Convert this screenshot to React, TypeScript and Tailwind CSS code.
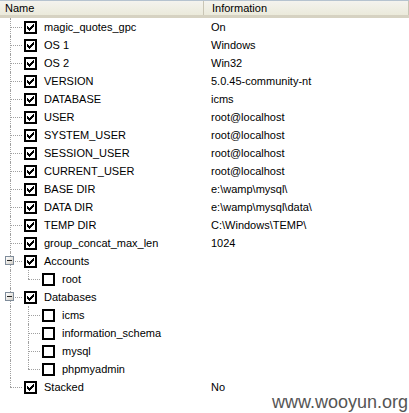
import React from "react";

type Row = { name: string; info?: string; level: 0 | 1; checked: boolean; expand?: boolean; childLine?: "mid" | "last" | "none"; last?: boolean };

const rows: Row[] = [
  { name: "magic_quotes_gpc", info: "On", level: 0, checked: true },
  { name: "OS 1", info: "Windows", level: 0, checked: true },
  { name: "OS 2", info: "Win32", level: 0, checked: true },
  { name: "VERSION", info: "5.0.45-community-nt", level: 0, checked: true },
  { name: "DATABASE", info: "icms", level: 0, checked: true },
  { name: "USER", info: "root@localhost", level: 0, checked: true },
  { name: "SYSTEM_USER", info: "root@localhost", level: 0, checked: true },
  { name: "SESSION_USER", info: "root@localhost", level: 0, checked: true },
  { name: "CURRENT_USER", info: "root@localhost", level: 0, checked: true },
  { name: "BASE DIR", info: "e:\\wamp\\mysql\\", level: 0, checked: true },
  { name: "DATA DIR", info: "e:\\wamp\\mysql\\data\\", level: 0, checked: true },
  { name: "TEMP DIR", info: "C:\\Windows\\TEMP\\", level: 0, checked: true },
  { name: "group_concat_max_len", info: "1024", level: 0, checked: true },
  { name: "Accounts", level: 0, checked: true, expand: true },
  { name: "root", level: 1, checked: false, childLine: "last" },
  { name: "Databases", level: 0, checked: true, expand: true },
  { name: "icms", level: 1, checked: false, childLine: "mid" },
  { name: "information_schema", level: 1, checked: false, childLine: "mid" },
  { name: "mysql", level: 1, checked: false, childLine: "mid" },
  { name: "phpmyadmin", level: 1, checked: false, childLine: "last" },
  { name: "Stacked", info: "No", level: 0, checked: true, last: true },
];

function Check({ checked }: { checked: boolean }) {
  return (
    <div className="w-[13px] h-[13px] border-2 border-black bg-white flex items-center justify-center shrink-0">
      {checked && (
        <svg width="9" height="9" viewBox="0 0 9 9" shapeRendering="crispEdges">
          <path d="M1 3h1v1h1v1h1V4h1V3h1V2h1V1h1v3H7v1H6v1H5v1H4v1H3V7H2V6H1z" fill="#000" />
        </svg>
      )}
    </div>
  );
}

function Expander() {
  return (
    <div className="w-[9px] h-[9px] border border-[#7f8c9a] bg-gradient-to-br from-white to-[#d4d0c8] flex items-center justify-center relative z-10">
      <div className="w-[5px] h-[1px] bg-[#222]" />
    </div>
  );
}

export default function App() {
  const font = { fontFamily: "Tahoma, 'Liberation Sans', 'DejaVu Sans', sans-serif" };
  return (
    <div className="w-[409px] h-[413px] bg-white relative overflow-hidden text-[11px] text-black" style={font}>
      <div className="flex h-[18px] bg-gradient-to-b from-[#f4f3ee] to-[#ebeadb] border-t border-[#b6c3cf] border-b-[3px] border-b-[#d6d2c2]">
        <div className="w-[204px] pl-[5px] flex items-center border-r border-[#c9c5b5]">Name</div>
        <div className="flex-1 pl-[8px] flex items-center border-r border-[#c9c5b5]">Information</div>
      </div>
      <div className="flex flex-col">
        {rows.map((r, i) => (
          <div key={i} className="flex h-[18px] items-center">
            <div className="w-[204px] h-full flex items-center">
              <div className="w-[24px] h-full relative shrink-0">
                <div className={`absolute left-[10px] top-0 border-l border-dotted border-[#a0a0a0] ${r.last ? "h-[9px]" : "h-full"}`} />
                {r.level === 0 && (
                  <div className="absolute left-[10px] top-[9px] w-[12px] border-t border-dotted border-[#a0a0a0]" />
                )}
                {r.expand && (
                  <div className="absolute left-[5px] top-[4px]">
                    <Expander />
                  </div>
                )}
              </div>
              {r.level === 1 && (
                <div className="w-[18px] h-full relative shrink-0">
                  <div className={`absolute left-[4px] top-0 border-l border-dotted border-[#a0a0a0] ${r.childLine === "last" ? "h-[9px]" : "h-full"}`} />
                  <div className="absolute left-[4px] top-[9px] w-[12px] border-t border-dotted border-[#a0a0a0]" />
                </div>
              )}
              <Check checked={r.checked} />
              <span className="ml-[7px] whitespace-nowrap">{r.name}</span>
            </div>
            <div className="pl-[7px] whitespace-nowrap">{r.info ?? ""}</div>
          </div>
        ))}
      </div>
      <div className="absolute right-[1px] bottom-[2px] text-[18px] text-[#555] leading-none" style={{ fontFamily: "'Liberation Sans', Arial, sans-serif" }}>
        www.wooyun.org
      </div>
    </div>
  );
}
